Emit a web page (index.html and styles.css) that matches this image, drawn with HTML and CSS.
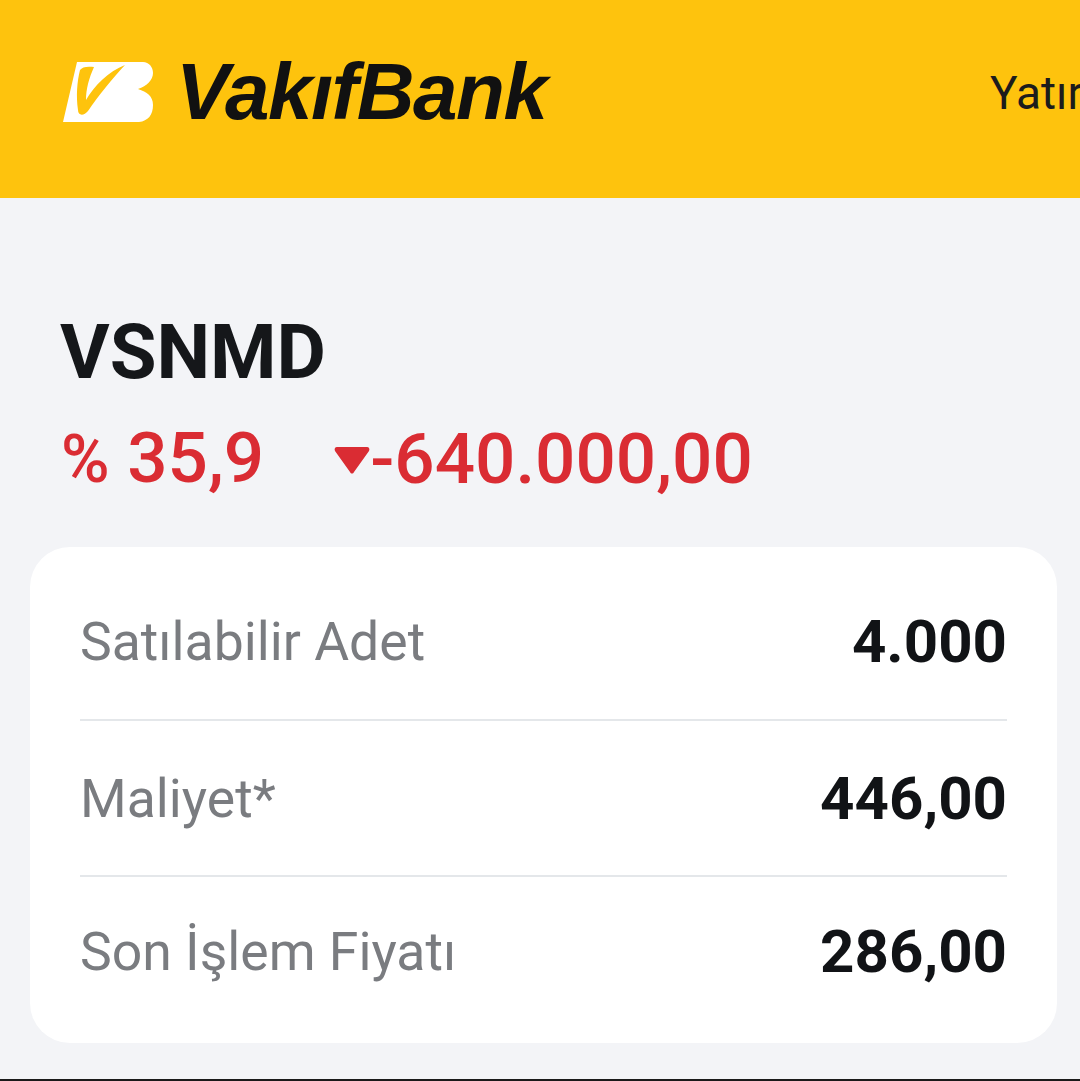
FILE: index.html
```html
<!DOCTYPE html>
<html lang="tr">
<head>
  <meta charset="UTF-8" />
  <title>VakıfBank</title>
  <link rel="stylesheet" href="styles.css">
</head>
<body>
  <header class="topbar">
    <svg class="logo-mark" viewBox="0 0 90 60" width="90" height="60">
      <path fill="#fff" d="M14 0H80C86 0 90 5 90 11C90 18 84 24 75 27C84 30 90 34 90 43C90 53 85 59 76 60H0Z"/>
      <path fill="#fec30d" d="M17 8C19 5 24 4 31 5C26 16 23 27 23 38C31 24 46 9 62 3C50 16 35 34 25 49C21 54 15 54 15 48C13 34 14 20 17 8Z"/>
    </svg>
    <span class="wordmark">VakıfBank</span>
    <span class="nav-link">Yatırım</span>
  </header>

  <main class="content">
    <h1 class="symbol">VSNMD</h1>
    <div class="change">
      <span class="percent"><span class="percent-sign">%</span> 35,9</span>
      <span class="amount">
        <svg class="arrow" viewBox="0 0 36 28" width="36" height="28">
          <path d="M3 1H33C35 1 36 3 35 5L20 26C19 28 17 28 16 26L1 5C0 3 1 1 3 1Z"/>
        </svg>-640.000,00
      </span>
    </div>

    <section class="card">
      <div class="row">
        <span class="label">Satılabilir Adet</span>
        <span class="value">4.000</span>
      </div>
      <div class="row">
        <span class="label">Maliyet*</span>
        <span class="value">446,00</span>
      </div>
      <div class="row">
        <span class="label">Son İşlem Fiyatı</span>
        <span class="value">286,00</span>
      </div>
    </section>
  </main>
</body>
</html>
```

FILE: styles.css
```css
html, body {
  margin: 0;
  height: 1081px;
  overflow: hidden;
}
body {
  font-family: Roboto, Arial, sans-serif;
  background: #f3f4f7;
  box-sizing: border-box;
  border-bottom: 2px solid #1a1a1a;
}
.topbar {
  display: flex;
  align-items: center;
  height: 198px;
  padding-left: 63px;
  background: #fec30d;
  overflow: hidden;
  white-space: nowrap;
}
.logo-mark {
  flex: none;
  margin-top: -15px;
}
.wordmark {
  flex: none;
  width: 368px;
  margin-left: 23px;
  margin-top: -15px;
  font-family: "Liberation Sans", Arial, sans-serif;
  font-size: 80px;
  font-weight: 700;
  font-style: italic;
  letter-spacing: -1.5px;
  color: #111;
}
.nav-link {
  flex: none;
  margin-left: 446px;
  margin-top: -12px;
  font-size: 46px;
  color: #1c1c1c;
}
.content {
  padding: 0 23px 0 30px;
}
.symbol {
  margin: 112px 0 0 30px;
  font-size: 76px;
  line-height: 84px;
  font-weight: 700;
  color: #15171a;
}
.change {
  display: flex;
  align-items: center;
  gap: 70px;
  margin: 24px 0 0 31px;
  font-size: 71px;
  line-height: 80px;
  font-weight: 500;
  color: #da2c33;
}
.percent-sign {
  font-size: 66px;
}
.amount {
  display: flex;
  align-items: center;
}
.arrow {
  fill: #da2c33;
  margin-top: 2px;
}
.card {
  margin-top: 47px;
  height: 496px;
  padding: 17px 50px 0;
  box-sizing: border-box;
  background: #fff;
  border-radius: 40px;
}
.row {
  display: flex;
  justify-content: space-between;
  align-items: center;
  height: 154px;
  border-bottom: 2px solid #e4e7ea;
  font-size: 53.5px;
}
.row:first-child {
  height: 155px;
}
.row:last-child {
  height: 148px;
  border-bottom: 0;
}
.label {
  color: #7a7c80;
}
.value {
  font-size: 60px;
  font-weight: 700;
  color: #111316;
}
```
